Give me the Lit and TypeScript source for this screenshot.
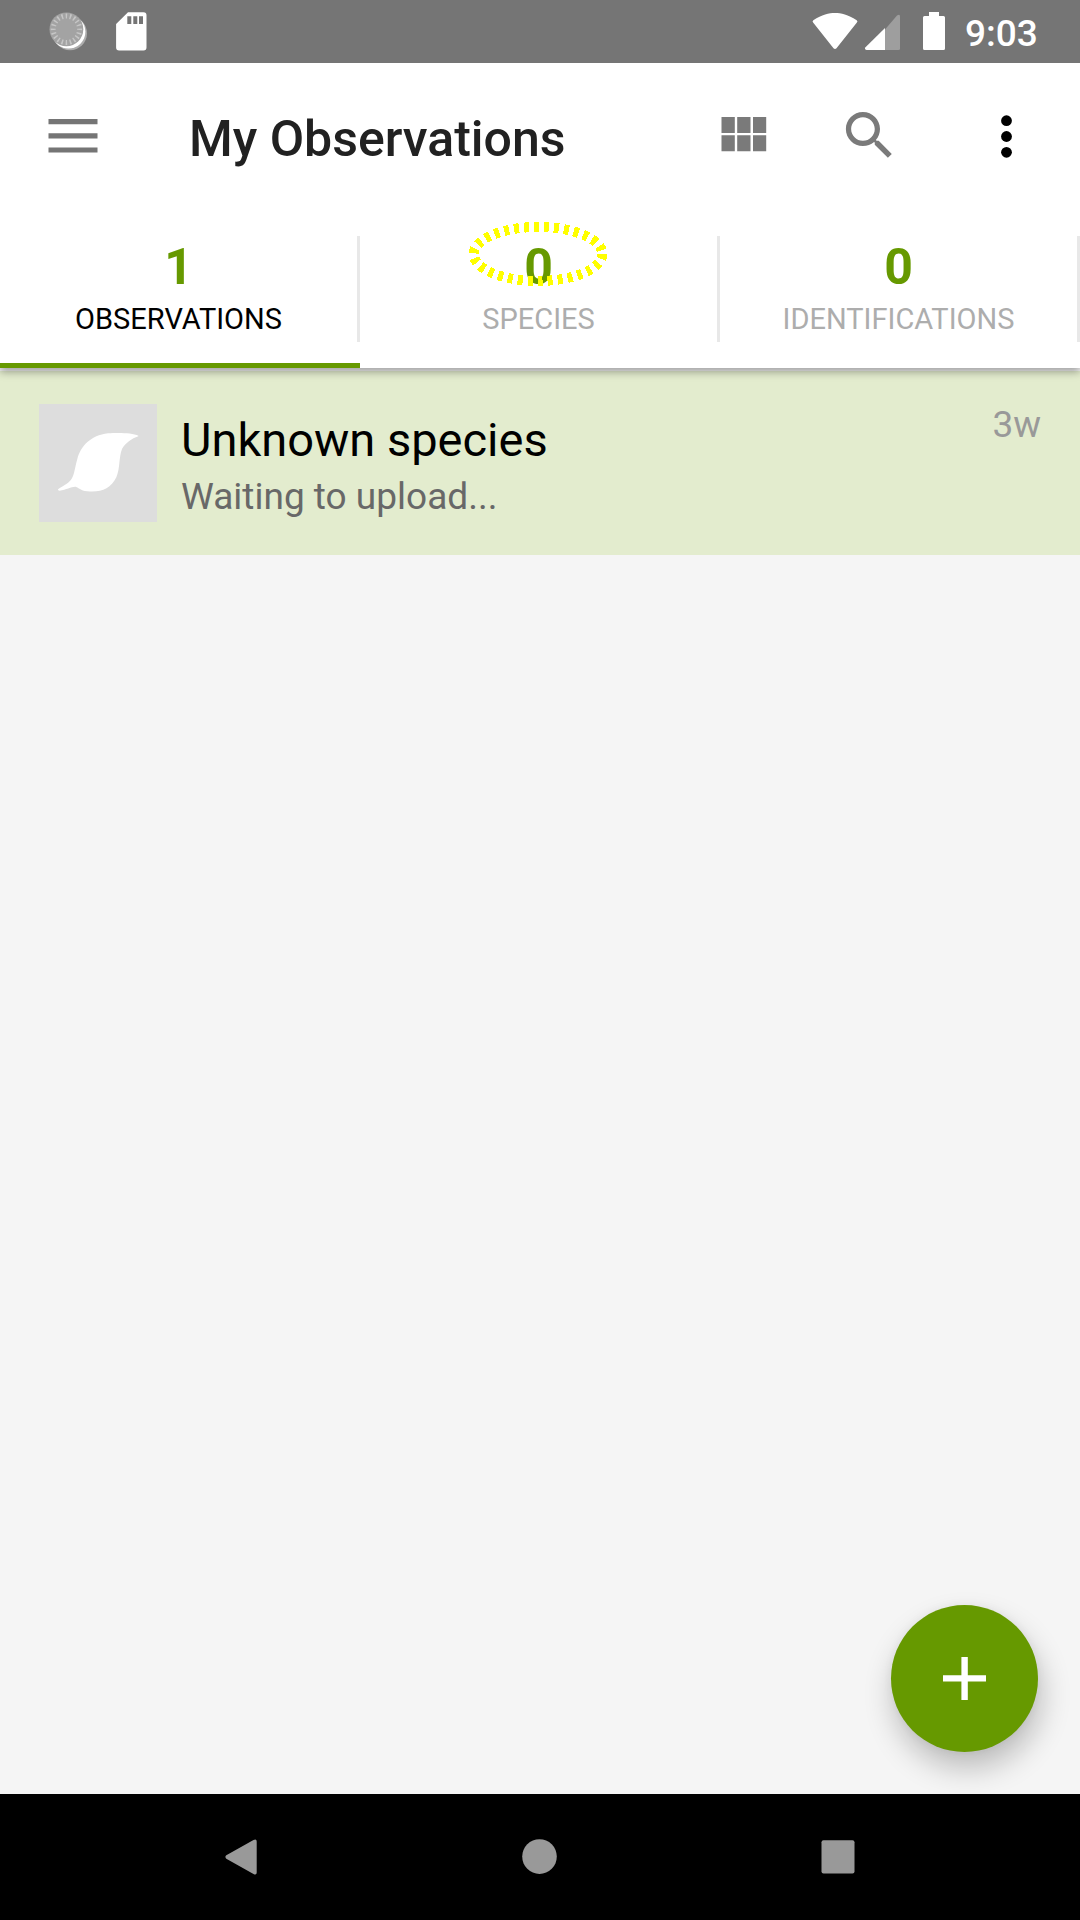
import { LitElement, html, css } from "lit";
import { customElement, state } from "lit/decorators.js";
import { classMap } from "lit/directives/class-map.js";

interface Tab {
  count: number;
  label: string;
}

@customElement("status-bar")
class StatusBar extends LitElement {
  static styles = css`
    :host {
      display: flex;
      justify-content: space-between;
      height: 63px;
      background: #757575;
      color: #fff;
    }
    svg {
      display: block;
    }
    .right {
      display: flex;
    }
    .clock {
      width: 115px;
      font-size: 37px;
      font-weight: 500;
      line-height: 43px;
      padding-top: 12px;
    }
  `;
  render() {
    return html`
      <svg width="160" height="63" viewBox="0 0 160 63">
        <circle cx="70" cy="33.200" r="17" fill="#adadad" />
        <circle cx="68.600" cy="31.800" r="16.800" fill="#fff" />
        <circle cx="66.400" cy="29.300" r="16.900" fill="#a3a3a3" />
        <circle
          cx="66.400" cy="29.300" r="13.200"
          fill="none" stroke="#c6c6c6" stroke-width="5" pathLength="200"
          stroke-dasharray="3.600 6.400" stroke-dashoffset="1.800"
        />
        <path
          fill="#fff"
          fill-rule="evenodd"
          d="M128 12.300h15.500a3 3 0 0 1 3 3v32.200a3 3 0 0 1-3 3h-24.400a3 3 0 0 1-3-3V24zM127.300 16.300v7.700h4v-7.700zM133.300 16.300v7.700h4v-7.700zM139 16.300v7.700h4v-7.700z"
        />
      </svg>
      <div class="right">
        <svg width="165" height="63" viewBox="800 0 165 63">
          <path
            fill="#fff"
            d="M813.300 22.800Q811.800 21.500 813.300 20.200C822 14.800 829 13 835 13s13 1.800 21.700 7.200q1.500 1.300 0 2.600L836.500 48.200q-1.500 1.500-3 0z"
          />
          <path fill="#9e9e9e" d="M885 29.500l12-14q3-2 3 0.800V48.500q0 1.500-1.500 1.500H885z" />
          <path fill="#fff" d="M885 28v22h-18.500q-2.500-.7-1-2.800z" />
          <path
            fill="#fff"
            d="M929 12h10v4h4.500q1.500 0 1.500 1.500v31q0 1.500-1.500 1.500h-19q-1.500 0-1.500-1.500v-31q0-1.500 1.500-1.500H929z"
          />
        </svg>
        <div class="clock">9:03</div>
      </div>
    `;
  }
}

@customElement("tool-bar")
class ToolBar extends LitElement {
  static styles = css`
    :host {
      display: flex;
      height: 147px;
      background: #fff;
    }
    svg {
      display: block;
      flex: none;
    }
    .title {
      flex: 1;
      margin: 0;
      padding-top: 46px;
      font-size: 50px;
      font-weight: 500;
      line-height: 60px;
      color: #212121;
      white-space: nowrap;
    }
  `;
  render() {
    return html`
      <svg width="189" height="147" viewBox="0 63 189 147">
        <path fill="#757575" d="M48.500 119h49v5.200h-49zM48.500 133.200h49v5.200h-49zM48.500 147.400h49v5.200h-49z" />
      </svg>
      <h1 class="title">My Observations</h1>
      <svg width="380" height="147" viewBox="700 63 380 147">
        <path
          fill="#7a7a7a"
          d="M721.500 117h13.300v16h-13.300zM737.200 117h13.300v16h-13.300zM753 117h13.200v16H753zM721.500 135.200h13.300v16h-13.300zM737.200 135.200h13.300v16h-13.300zM753 135.200h13.200v16H753z"
        />
        <path
          fill="#7a7a7a"
          transform="translate(838 104) scale(2.625)"
          d="M15.500 14h-.79l-.28-.27C15.410 12.590 16 11.110 16 9.500 16 5.910 13.090 3 9.500 3S3 5.910 3 9.500 5.910 16 9.500 16c1.610 0 3.090-.59 4.230-1.570l.27.28v.79l5 4.990L20.490 19l-4.990-5zm-6 0C7.010 14 5 11.990 5 9.500S7.010 5 9.500 5 14 7.010 14 9.500 11.990 14 9.500 14z"
        />
        <circle cx="1006.500" cy="120.700" r="5.400" />
        <circle cx="1006.500" cy="136.500" r="5.400" />
        <circle cx="1006.500" cy="152.300" r="5.400" />
      </svg>
    `;
  }
}

@customElement("stat-tabs")
class StatTabs extends LitElement {
  @state() private selected = 0;

  private tabs: Tab[] = [
    { count: 1, label: "Observations" },
    { count: 0, label: "Species" },
    { count: 0, label: "Identifications" },
  ];

  static styles = css`
    :host {
      display: grid;
      grid-template-columns: repeat(3, 360px);
      height: 158px;
      background: #fff;
      box-shadow: 0 4px 8px rgba(0, 0, 0, 0.34);
      clip-path: inset(0 0 -20px 0);
      position: relative;
    }
    .tab {
      position: relative;
      display: flex;
      flex-direction: column;
      box-sizing: border-box;
      padding-top: 26px;
      text-align: center;
      color: #adadad;
      border-bottom: 5px solid transparent;
    }
    .active {
      color: #000;
      border-bottom-color: #690;
    }
    .body {
      height: 106px;
      box-sizing: border-box;
      border-right: 3px solid #e8e8e8;
    }
    .count {
      padding-top: 1px;
      font-size: 50px;
      font-weight: 700;
      line-height: 60px;
      color: #690;
    }
    .label {
      margin-top: 5px;
      font-size: 29px;
      line-height: 34px;
      text-transform: uppercase;
    }
    .ring {
      position: absolute;
      left: 100px;
      top: 4px;
    }
  `;
  render() {
    return html`${this.tabs.map(
      (t, i) => html`
        <div class=${classMap({ tab: true, active: i === this.selected })} @click=${() => (this.selected = i)}>
          <div class="body">
            <div class="count">${t.count}</div>
            <div class="label">${t.label}</div>
          </div>
          ${i === 1
            ? html`<svg class="ring" width="156" height="80" viewBox="460 214 156 80" shape-rendering="crispEdges">
                <ellipse
                  cx="538" cy="254" rx="64.400" ry="27"
                  fill="none" stroke="#ff0" stroke-width="10" stroke-dasharray="5 5"
                />
              </svg>`
            : ""}
        </div>
      `
    )}`;
  }
}

@customElement("observation-row")
class ObservationRow extends LitElement {
  static styles = css`
    :host {
      display: flex;
      box-sizing: border-box;
      height: 184px;
      padding: 33px 39px;
      background: #e3ecce;
    }
    .thumb {
      display: block;
      flex: none;
      width: 118px;
      height: 118px;
      background: #ddd;
    }
    .text {
      flex: 1;
      padding-left: 24px;
    }
    .name {
      padding-top: 8px;
      font-size: 47px;
      line-height: 56px;
      color: #000;
    }
    .status {
      margin-top: 7px;
      font-size: 37px;
      line-height: 43px;
      color: #686868;
    }
    .age {
      margin-top: -1px;
      font-size: 37px;
      line-height: 43px;
      color: #999;
    }
  `;
  render() {
    return html`
      <svg class="thumb" viewBox="0 0 354 354">
        <path
          fill="#fff"
          d="M298 95C280 86 235 86 207 88C155 94 125 127 115 165C107 192 106 215 96 227C86 240 68 247 57 256Q56 260 62 260C82 257 98 247 110 248C120 251 123 259 145 262C185 266 215 255 232 220C244 192 239 160 249 135C259 117 278 104 298 97Z"
        />
      </svg>
      <div class="text">
        <div class="name">Unknown species</div>
        <div class="status">Waiting to upload...</div>
      </div>
      <div class="age">3w</div>
    `;
  }
}

@customElement("app-root")
class AppRoot extends LitElement {
  static styles = css`
    :host {
      display: flex;
      flex-direction: column;
      width: 1080px;
      height: 1920px;
      overflow: hidden;
      background: #f5f5f5;
      font-family: Roboto, "Liberation Sans", sans-serif;
    }
    stat-tabs {
      z-index: 1;
    }
    .content {
      flex: 1;
      position: relative;
      padding-top: 3px;
    }
    .fab {
      position: absolute;
      right: 42px;
      bottom: 42px;
      width: 147px;
      height: 147px;
      padding: 0;
      border: 0;
      border-radius: 50%;
      background: #690;
      box-shadow: 3px 16px 30px rgba(0, 0, 0, 0.24), 0 0 10px rgba(0, 0, 0, 0.05);
    }
    .fab svg,
    .nav svg {
      display: block;
    }
    .nav {
      position: relative;
      height: 126px;
      background: #000;
    }
  `;
  render() {
    return html`
      <status-bar></status-bar>
      <tool-bar></tool-bar>
      <stat-tabs></stat-tabs>
      <main class="content">
        <observation-row></observation-row>
        <button class="fab">
          <svg width="147" height="147" viewBox="891 1605 147 147">
            <path fill="#fff" d="M961.400 1657h6.400v18.200H986v6.400h-18.200V1700h-6.400v-18.400H943v-6.400h18.400z" />
          </svg>
        </button>
      </main>
      <nav class="nav">
        <svg width="1080" height="126" viewBox="0 1794 1080 126">
          <g fill="#999">
            <path d="M226.300 1855.300L253.500 1840q3.200-1.500 3.200 1.500v31q0 3-3.200 1.500L226.300 1858.700q-1.800-1.700 0-3.400z" />
            <circle cx="539.500" cy="1856.600" r="17.300" />
            <rect x="821.500" y="1840.300" width="33" height="33.300" rx="2" />
          </g>
        </svg>
      </nav>
    `;
  }
}
